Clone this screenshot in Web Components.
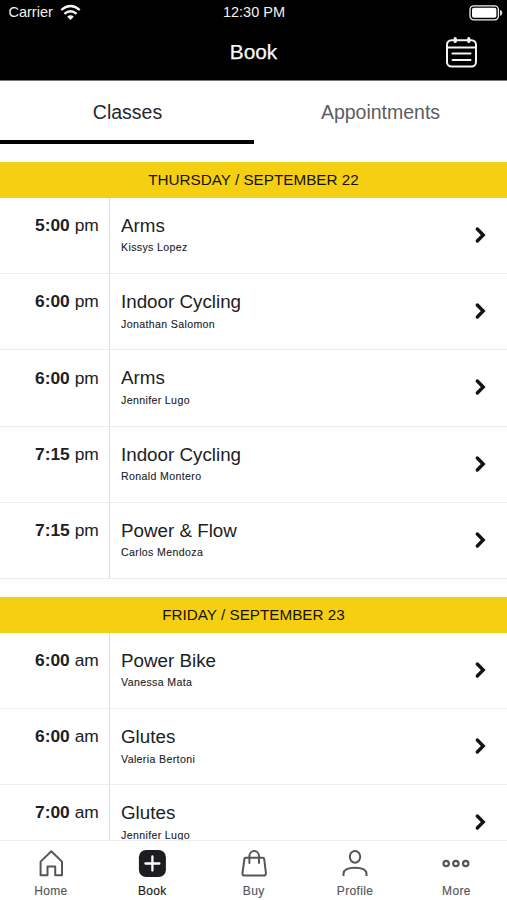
<!DOCTYPE html>
<html lang="en"><head><meta charset="utf-8"><title>Book</title>
<style>html,body{margin:0;height:100%;background:#fff;overflow:hidden}body{font-family:"Liberation Sans",Arial,sans-serif;color:#202124}</style></head>
<body><booking-app></booking-app>
<script>
const define = (name, html) => customElements.define(name, class extends HTMLElement {
  constructor() {
    super();
    this.attachShadow({mode: 'open'}).innerHTML = html;
  }
});

define('status-bar', `<style>
:host{display:grid;grid-template-columns:1fr auto 1fr;align-items:start;height:26px;padding:4px 4px 0 8.5px;box-sizing:border-box;font-size:14.5px;line-height:17px;color:#f2f2f2}
.left{display:flex;gap:7.5px}.right{justify-self:end}svg{display:block}
.time{margin-left:-3.5px;margin-top:-.4px}
</style><div class="left"><span>Carrier</span>
<svg width="21" height="17" viewBox="0 0 21 17" fill="none" stroke="#f4f4f4" stroke-width="2.3"><path d="M1.2 6Q10.5-2 19.8 6M4.4 9.8Q10.5 4.8 16.6 9.8"/><path d="M7.2 12.7Q10.5 9.9 13.8 12.7L10.5 16Z" fill="#f4f4f4" stroke="none"/></svg></div>
<span class="time">12:30 PM</span>
<svg class="right" width="34" height="18" viewBox="0 0 34 18"><rect x="1" y="1.8" width="28.4" height="14" rx="3.8" fill="none" stroke="#f5f5f5" stroke-width="1.3"/><rect x="3" y="3.8" width="24.4" height="10" rx="1.8" fill="#fff"/><path d="M31 5.7Q33.3 6.5 33.3 8.8T31 11.9Z" fill="#ddd"/></svg>`);

define('nav-bar', `<style>
:host{display:grid;grid-template-columns:1fr auto 1fr;align-items:center;height:54px;padding:0 30px;box-sizing:border-box;color:#fafafa;font-size:20.8px}
.t{grid-column:2;line-height:24px;margin-top:-2px;-webkit-text-stroke:.25px #fafafa}svg{display:block;justify-self:end}
</style><span class="t"><slot></slot></span>
<svg width="31" height="32" viewBox="0 0 31 32" fill="none" stroke="#f5f5f5" stroke-width="2" stroke-linecap="round"><rect x="1" y="3.2" width="29" height="26.4" rx="4.5"/><path d="M1 10.6H30M6.5 16.5H24.5M6.5 22.9H24.5"/><path d="M9.2 1.6V4.4M22.8 1.6V4.4" stroke-width="3.2"/></svg>`);

define('tab-item', `<style>
:host{display:flex;flex:1;justify-content:center;box-sizing:border-box;height:64px;padding-top:19.6px;font-size:19.5px;line-height:24px;color:#5b5d62;border-bottom:4px solid transparent}
:host([selected]){color:#25272a;border-color:#000;padding-left:1px}</style><slot></slot>`);

define('day-header', `<style>
:host{display:block;height:35.6px;margin-top:18.4px;background:#f5cf12;text-align:center;font-size:15.25px;line-height:35.6px;color:#161306}</style><slot></slot>`);

define('class-row', `<style>
:host{display:grid;grid-template-columns:110px 1fr auto;height:76.2px;box-sizing:border-box;border-bottom:1px solid #ececec}
.time{text-align:right;padding:16.2px 10.2px 0 0;font-size:17.4px;line-height:22px;border-right:1px solid #dcdddf}
.info{padding:16px 0 0 11px;font-size:18.8px;line-height:24px}
.who{font-size:10.6px;line-height:14px;letter-spacing:.36px;margin-top:2.5px;-webkit-text-stroke:.1px}
svg{align-self:center;margin:-1px 20px 0 0}
</style><div class="time"><b><slot name="time"></slot></b> <slot name="period"></slot></div>
<div class="info"><div><slot></slot></div><div class="who"><slot name="trainer"></slot></div></div>
<svg width="14" height="18" viewBox="0 0 14 18" fill="none" stroke="#111315" stroke-width="3.4" stroke-linecap="round" stroke-linejoin="miter"><path d="M4.3 3L10.2 9L4.3 15"/></svg>`);

const icons = {
  home: '<path d="M4.6 12.6L15.3 2.2L26 12.6V26.2H19.2V17.4H11.5V26.2H4.6Z" />',
  book: '<rect x="1.9" y="1" width="27" height="27" rx="7.2" fill="#1c1d20" stroke="none"/><path d="M15.4 7.5V21.5M8.4 14.5H22.4" stroke="#fff" stroke-width="2.3" stroke-linecap="round"/>',
  buy: '<path d="M6.6 8.8H23.8Q25 8.8 25.2 10L26.9 24Q27.1 26.6 24.5 26.6H5.9Q3.1 26.6 3.5 24L5.4 10Q5.5 8.8 6.6 8.8Z"/><path d="M10.4 14V7.4C10.4.2 20 .2 20 7.4V14" stroke-linecap="round"/>',
  profile: '<ellipse cx="15" cy="7.8" rx="5.2" ry="5.9"/><path d="M3.5 27V24.8Q3.7 18.8 15 18.8T26.5 24.8V27"/>',
  more: '<g stroke-width="2.2"><circle cx="5.2" cy="14.5" r="2.7"/><circle cx="14.9" cy="14.5" r="2.7"/><circle cx="24.7" cy="14.5" r="2.7"/></g>'
};
customElements.define('tab-button', class extends HTMLElement {
  constructor() {
    super();
    this.attachShadow({mode: 'open'}).innerHTML = `<style>
:host{flex:1;display:flex;flex-direction:column;align-items:center;padding-top:8px;font-size:12px;line-height:16px;letter-spacing:.35px;color:#54565b;-webkit-text-stroke:.15px}
:host([selected]){color:#1c1d20;-webkit-text-stroke:.2px}svg{display:block;margin-bottom:4.4px}span{padding-left:.3px}
</style><svg width="30" height="30" viewBox="0 0 30 30" fill="none" stroke="#54565b" stroke-width="2" stroke-linejoin="round">${icons[this.getAttribute('icon')]}</svg><span><slot></slot></span>`;
  }
});

const row = (time, period, name, trainer) => `<class-row><span slot="time">${time}</span><span slot="period">${period}</span>${name}<span slot="trainer">${trainer}</span></class-row>`;
define('booking-app', `<style>
:host{display:grid;grid-template-rows:80px 64px 1fr 60px;height:900px;width:507px;overflow:hidden}
header{background:#000;border-bottom:1px solid #777;box-sizing:content-box;height:80px}
.tabs{display:flex}main{overflow:hidden;min-height:0}
footer{display:flex;background:#fff;border-top:1px solid #ececec;box-sizing:border-box;z-index:1}
</style><header><status-bar></status-bar><nav-bar>Book</nav-bar></header>
<div class="tabs"><tab-item selected>Classes</tab-item><tab-item>Appointments</tab-item></div>
<main><day-header>THURSDAY / SEPTEMBER 22</day-header>
${row('5:00','pm','Arms','Kissys Lopez')}${row('6:00','pm','Indoor Cycling','Jonathan Salomon')}${row('6:00','pm','Arms','Jennifer Lugo')}${row('7:15','pm','Indoor Cycling','Ronald Montero')}${row('7:15','pm','Power &amp; Flow','Carlos Mendoza')}
<day-header>FRIDAY / SEPTEMBER 23</day-header>
${row('6:00','am','Power Bike','Vanessa Mata')}${row('6:00','am','Glutes','Valeria Bertoni')}${row('7:00','am','Glutes','Jennifer Lugo')}</main>
<footer><tab-button icon="home">Home</tab-button><tab-button icon="book" selected>Book</tab-button><tab-button icon="buy">Buy</tab-button><tab-button icon="profile">Profile</tab-button><tab-button icon="more">More</tab-button></footer>`);
</script></body></html>
